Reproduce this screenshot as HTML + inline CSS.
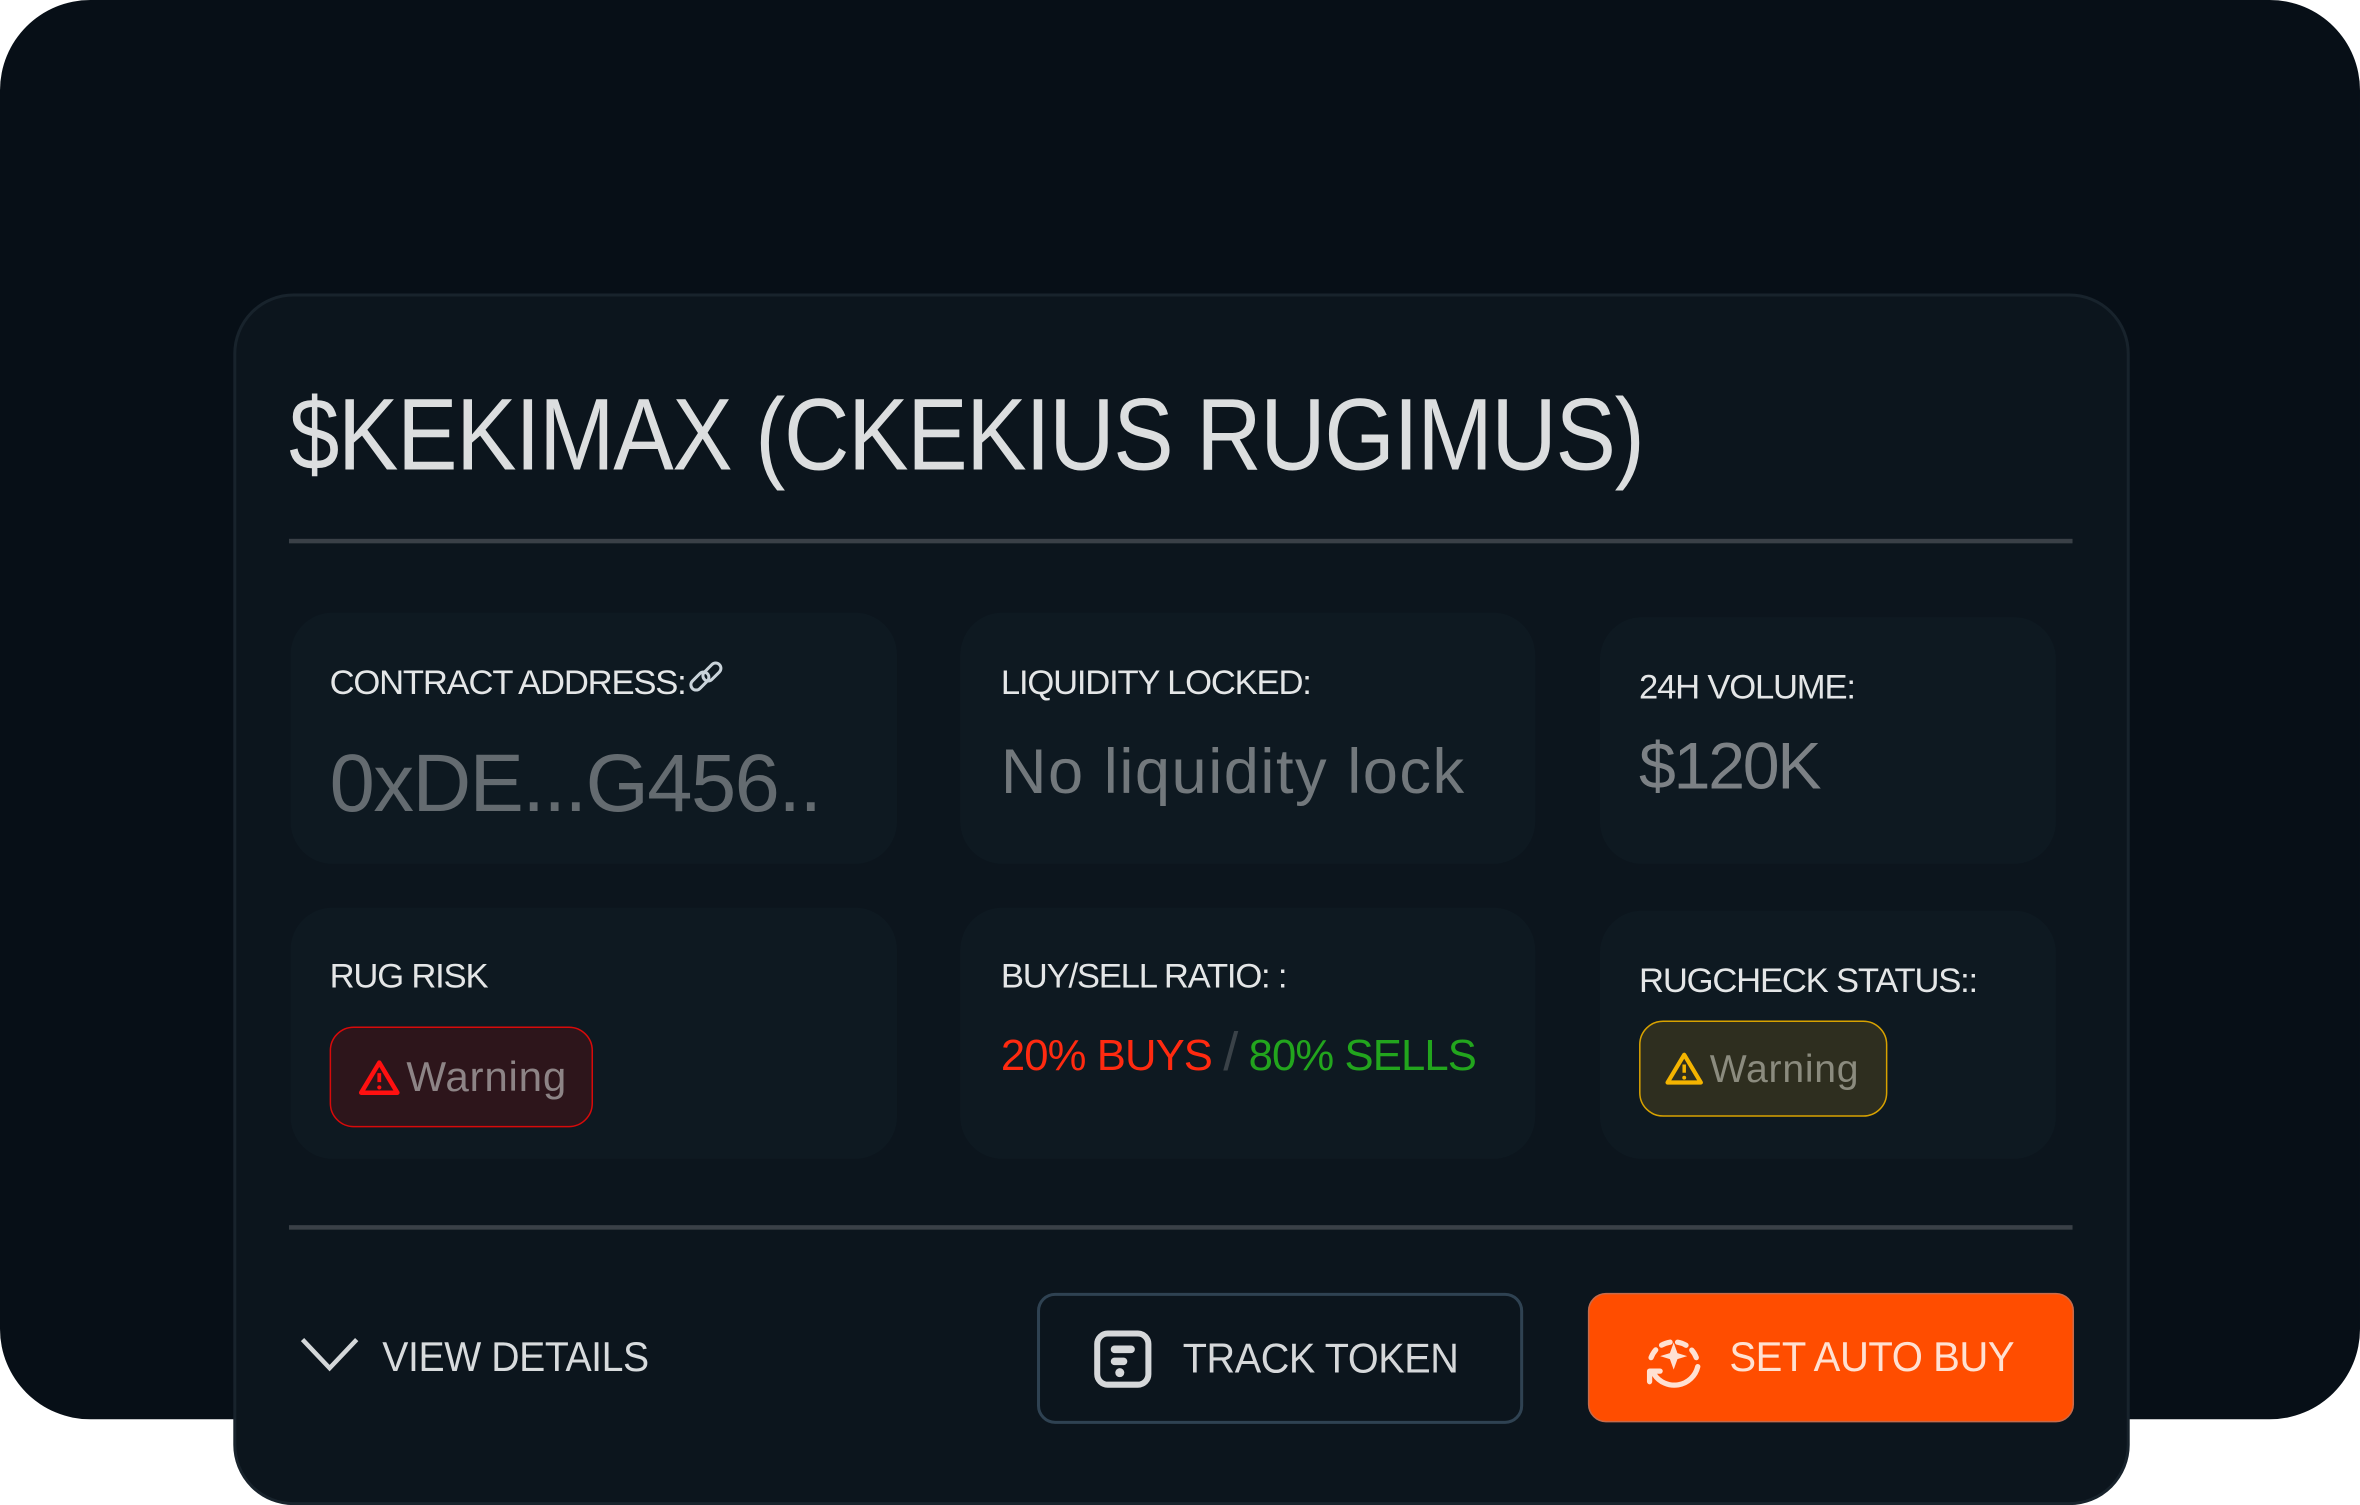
<!DOCTYPE html>
<html><head><meta charset="utf-8"><style>
html,body{margin:0;padding:0;background:#fff;width:2360px;height:1505px;overflow:hidden}
#w{position:absolute;left:0;top:0;width:1568px;height:1000px;transform:scale(1.50510);transform-origin:0 0;font-family:"Liberation Sans",sans-serif}
.bg{position:absolute;left:0;top:0;width:1568px;height:943px;background:#070f17;border-radius:60px}
.card{position:absolute;left:155px;top:195px;width:1256px;height:801px;background:#0c151d;border:2px solid #18232c;border-radius:40px}
.t{position:absolute;white-space:nowrap}
.title{left:192px;top:250px;font-size:68px;color:#dcdedf;letter-spacing:-1px;transform:scaleX(0.885);transform-origin:0 0}
.hr{position:absolute;left:192px;width:1185px;height:3px;background:#3a4047}
.tile{position:absolute;background:#0e1921;border-radius:28px}
.lab{font-size:23px;color:#e4e6e7;letter-spacing:-0.8px}
.badge{position:absolute;border-radius:16px;display:flex;align-items:center;font-size:28px;letter-spacing:0.5px}
.btn{position:absolute;border-radius:12px;display:flex;align-items:center;justify-content:center;font-size:28px;letter-spacing:-0.3px}
</style></head><body><div id="w">
<div class="bg"></div>
<div class="card"></div>
<div class="t title">$KEKIMAX (CKEKIUS RUGIMUS)</div>
<div class="hr" style="top:358px"></div>
<div class="tile" style="left:193px;top:407px;width:403px;height:167px"></div>
<div class="tile" style="left:638px;top:407px;width:382px;height:167px"></div>
<div class="tile" style="left:1063px;top:410px;width:303px;height:164px"></div>
<div class="tile" style="left:193px;top:603px;width:403px;height:167px"></div>
<div class="tile" style="left:638px;top:603px;width:382px;height:167px"></div>
<div class="tile" style="left:1063px;top:605px;width:303px;height:165px"></div>
<div class="t lab" style="left:219px;top:440px">CONTRACT ADDRESS:</div>
<svg class="t" style="left:456px;top:438px" width="26" height="26" viewBox="0 0 26 26"><rect x="2" y="11" width="14" height="7" rx="3.5" transform="rotate(-45 9 14.5)" fill="none" stroke="#c9d3da" stroke-width="2"/><rect x="10" y="5" width="14" height="7" rx="3.5" transform="rotate(-45 17 8.5)" fill="none" stroke="#c9d3da" stroke-width="2"/></svg>
<div class="t" style="left:219px;top:490px;font-size:54px;color:#646b70;letter-spacing:-1px">0xDE...G456..</div>
<div class="t lab" style="left:665px;top:440px">LIQUIDITY LOCKED:</div>
<div class="t" style="left:665px;top:489px;font-size:42px;color:#72787c;letter-spacing:1px">No liquidity lock</div>
<div class="t lab" style="left:1089px;top:443px">24H VOLUME:</div>
<div class="t" style="left:1089px;top:485px;font-size:44px;color:#7c8185;letter-spacing:-1.5px">$120K</div>
<div class="t lab" style="left:219px;top:635px">RUG RISK</div>
<div class="badge" style="left:219px;top:682px;width:173px;height:65px;background:#2d151b;border:1px solid #d80a0a;color:#8d8486">
<svg width="28" height="26" viewBox="0 0 28 26" style="margin:0 4px 0 18px"><path d="M14 3 L26 23 L2 23 Z" fill="none" stroke="#ff1010" stroke-width="3" stroke-linejoin="round"/><path d="M14 10v6" stroke="#ff1010" stroke-width="2.5"/><circle cx="14" cy="19.5" r="1.4" fill="#ff1010"/></svg>Warning</div>
<div class="t lab" style="left:665px;top:635px">BUY/SELL RATIO: :</div>
<div class="t" style="left:665px;top:678px;font-size:29px;letter-spacing:-0.6px"><span style="color:#ff2a10">20% BUYS</span> <span style="color:#3a4248;font-size:36px">/</span> <span style="color:#22a51d">80% SELLS</span></div>
<div class="t lab" style="left:1089px;top:638px">RUGCHECK STATUS::</div>
<div class="badge" style="left:1089px;top:678px;width:163px;height:62px;background:#2e2e1f;border:1px solid #d8a200;color:#8b8b7e;font-size:26px">
<svg width="26" height="24" viewBox="0 0 28 26" style="margin:0 4px 0 16px"><path d="M14 3 L26 23 L2 23 Z" fill="none" stroke="#f4b400" stroke-width="3" stroke-linejoin="round"/><path d="M14 10v6" stroke="#f4b400" stroke-width="2.5"/><circle cx="14" cy="19.5" r="1.4" fill="#f4b400"/></svg>Warning</div>
<div class="hr" style="top:814px"></div>
<svg class="t" style="left:198px;top:886px" width="42" height="28" viewBox="0 0 42 28"><path d="M3 4 L21 23 L39 4" fill="none" stroke="#d4d7d9" stroke-width="3"/></svg>
<div class="t" style="left:254px;top:886px;font-size:28px;color:#d8dbdd;letter-spacing:-0.3px;transform:scaleX(0.93);transform-origin:0 0">VIEW DETAILS</div>
<div class="btn" style="left:689px;top:859px;width:319px;height:83px;border:2px solid #2f4252;background:#0c151d;color:#d6d8da">
<svg width="40" height="40" viewBox="0 0 40 40" style="margin-right:14px"><rect x="3" y="3" width="34" height="34" rx="7" fill="none" stroke="#d6d8da" stroke-width="4"/><rect x="12" y="11" width="16" height="5" rx="2.5" fill="#d6d8da"/><rect x="12" y="19" width="11" height="5" rx="2.5" fill="#d6d8da"/><circle cx="18" cy="29" r="3" fill="#d6d8da"/></svg><span style="transform:scaleX(0.94);display:inline-block">TRACK TOKEN</span></div>
<div class="btn" style="left:1055px;top:859px;width:321px;height:84px;background:#ff4d00;border:1px solid #c86a4a;color:#ffe1d2">
<svg width="44" height="44" viewBox="0 0 44 44" style="margin-right:10px"><path d="M7 22 A16 16 0 0 1 37 22" fill="none" stroke="#ffe1d2" stroke-width="3.5" stroke-dasharray="6 5" stroke-linecap="round"/><path d="M38 28 A16 16 0 0 1 9 33" fill="none" stroke="#ffe1d2" stroke-width="3.5" stroke-linecap="round"/><path d="M6 38 L6 31 L13 31" fill="none" stroke="#ffe1d2" stroke-width="3.5" stroke-linecap="round" stroke-linejoin="round"/><path d="M22 12 L24.5 19 L31 21 L24.5 23 L22 30 L19.5 23 L13 21 L19.5 19 Z" fill="#ffe1d2"/></svg><span style="transform:scaleX(0.95);display:inline-block">SET AUTO BUY</span></div>
</div></body></html>
